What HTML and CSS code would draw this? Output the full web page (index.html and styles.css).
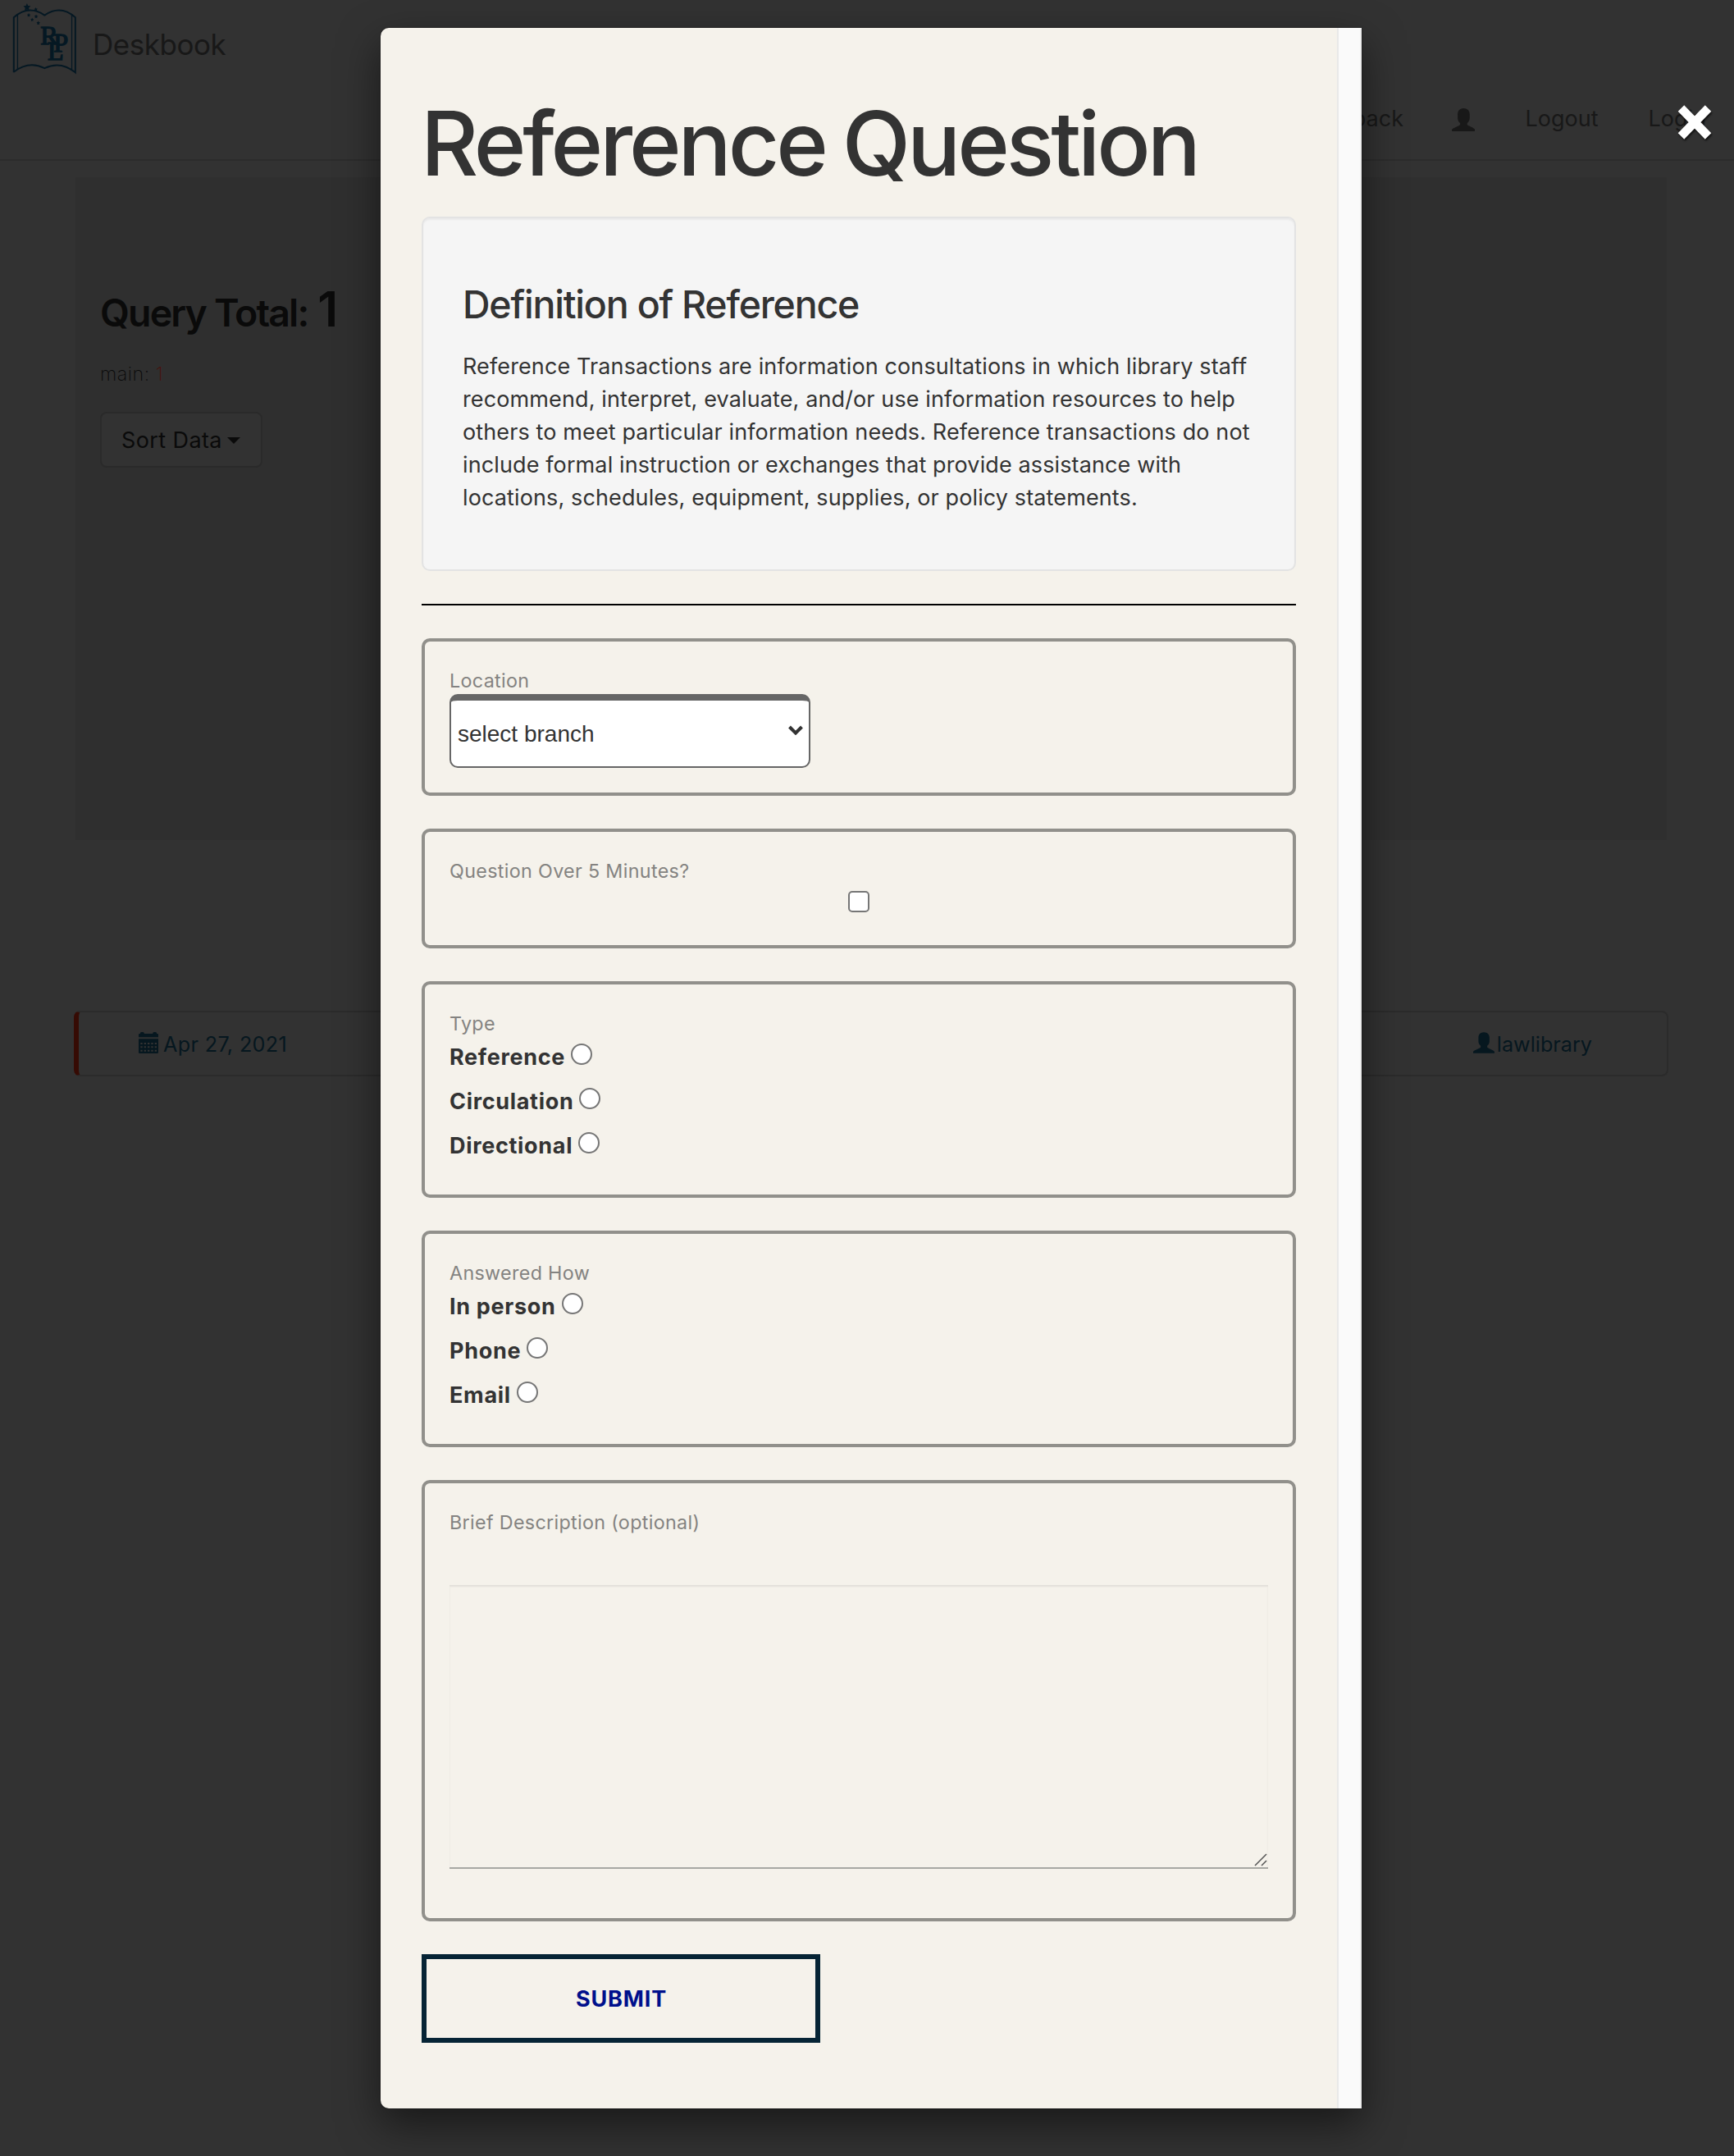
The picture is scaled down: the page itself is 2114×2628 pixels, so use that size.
FILE: index.html
```html
<!DOCTYPE html>
<html lang="en">
<head>
<meta charset="utf-8">
<title>Deskbook</title>
<link rel="stylesheet" href="styles.css">
</head>
<body>
<svg width="0" height="0" class="defs" aria-hidden="true">
  <symbol id="user" viewBox="0 0 85 84"><path d="M43 0C29 0 21 9 21 22V34C21 44 24 50 30 54V60C30 63 2 72 0 78V84H85V78C83 72 56 63 56 60V54C62 50 65 44 65 34V22C65 9 56 0 43 0Z"/></symbol>
  <symbol id="star" viewBox="0 0 20 20"><path d="M10 0L13 6.500L20 7.500L15 12.500L16 20L10 16.500L4 20L5 12.500L0 7.500L7 6.500Z"/></symbol>
</svg>

<header class="navbar">
  <div class="brand">
    <svg class="logo" viewBox="0 0 300 280">
      <g fill="none" stroke="currentColor">
        <path stroke-width="6" d="M50 266V64Q105 16 163 56Q222 16 276 64V266Q222 222 163 250Q105 222 50 264"/>
        <path stroke-width="4" d="M64 54V254M263 54V254"/>
      </g>
      <g fill="currentColor">
        <use href="#star" x="84" y="12" width="29" height="27"/>
        <use href="#star" x="124" y="27" width="14" height="14"/>
        <use href="#star" x="98" y="48" width="14" height="14"/>
        <use href="#star" x="125" y="53" width="14" height="14"/>
        <use href="#star" x="111" y="65" width="13" height="13"/>
        <use href="#star" x="133" y="77" width="14" height="14"/>
        <g class="monogram"><text x="148" y="163">R</text><text x="196" y="190">P</text><text x="174" y="221">L</text></g>
      </g>
    </svg>
    <span class="brand-name">Deskbook</span>
  </div>
  <nav class="nav">
    <a>Feedback</a>
    <svg class="nav-user"><use href="#user"/></svg>
    <a>Logout</a>
    <a>Login</a>
  </nav>
</header>

<main class="container">
  <section class="jumbotron">
    <h2 class="total">Query Total: <span class="total-count">1</span></h2>
    <p class="branch">main: <span class="branch-count">1</span></p>
    <button class="sort">Sort Data <span class="caret"></span></button>
  </section>
  <section class="entry">
    <a class="entry-link">
      <svg class="calendar" viewBox="0 0 72 78">
        <path d="M0 9Q0 6 4 6H6V3Q6 0 13 0T20 3V6H52V3Q52 0 59 0T66 3V6H68Q72 6 72 9V19H0ZM0 25H72V74Q72 78 68 78H4Q0 78 0 74Z"/>
        <path class="calendar-days" d="M7 42H66M7 55H66M7 68H66"/>
      </svg>
      <span>Apr 27, 2021</span>
    </a>
    <a class="entry-link entry-user"><svg class="entry-icon"><use href="#user"/></svg><span>lawlibrary</span></a>
  </section>
</main>

<svg class="close" viewBox="0 0 42 44"><path d="M4.500 5L37.500 39M37.500 5L4.500 39"/></svg>

<div class="modal">
  <form class="sheet">
    <h1 class="title">Reference Question</h1>
    <div class="well">
      <h3 class="well-title">Definition of Reference</h3>
      <p class="well-text">Reference Transactions are information consultations in which library staff<br>recommend, interpret, evaluate, and/or use information resources to help<br>others to meet particular information needs. Reference transactions do not<br>include formal instruction or exchanges that provide assistance with<br>locations, schedules, equipment, supplies, or policy statements.</p>
    </div>
    <hr class="rule">
    <div class="fields">
      <div class="field field-location">
        <div class="legend">Location</div>
        <div class="select-wrap">
          <select class="select"><option>select branch</option></select>
          <svg class="chevron" viewBox="0 0 18 12"><path d="M1.500 2L9 9.500L16.500 2"/></svg>
        </div>
      </div>
      <div class="field field-check">
        <div class="legend">Question Over 5 Minutes?</div>
        <input class="check" type="checkbox">
      </div>
      <div class="field field-radios">
        <div class="legend">Type</div>
        <label class="option">Reference<input class="radio" type="radio" name="type"></label>
        <label class="option">Circulation<input class="radio" type="radio" name="type"></label>
        <label class="option">Directional<input class="radio" type="radio" name="type"></label>
      </div>
      <div class="field field-radios">
        <div class="legend">Answered How</div>
        <label class="option">In person<input class="radio" type="radio" name="how"></label>
        <label class="option">Phone<input class="radio" type="radio" name="how"></label>
        <label class="option">Email<input class="radio" type="radio" name="how"></label>
      </div>
      <div class="field field-text">
        <div class="legend">Brief Description (optional)</div>
        <div class="area-wrap">
          <textarea class="area"></textarea>
          <svg class="grip" viewBox="0 0 16 16"><path d="M1 15L15 1M9 15L15 9"/></svg>
        </div>
      </div>
    </div>
    <button class="submit" type="button">SUBMIT</button>
  </form>
  <div class="scrollbar"></div>
</div>
</body>
</html>
```
FILE: styles.css
```css
* { box-sizing: border-box; }
body {
  margin: 0;
  height: 2628px;
  overflow: hidden;
  position: relative;
  background: #323232;
  font-family: Inter, "Liberation Sans", sans-serif;
  font-size: 27px;
  color: #333;
}
h1, h2, h3, p { margin: 0; font-weight: 500; }
.defs { position: absolute; }

/* Page behind the dialog */
.navbar {
  display: flex;
  justify-content: space-between;
  height: 196px;
  border-bottom: 2px solid #2c2c2c;
  color: #181818;
}
.brand { display: flex; align-items: flex-start; }
.logo { width: 100px; height: 93px; color: #051823; }
.monogram { font: 400 97px "Liberation Serif", serif; stroke: currentColor; stroke-width: 4px; }
.brand-name { margin-left: 13px; font-size: 35px; line-height: 108px; letter-spacing: -0.450px; }
.nav { display: flex; align-items: flex-start; padding: 125px 34px 0 0; line-height: 40px; }
.nav a { margin-left: 60px; }
.nav-user { width: 28.500px; height: 28px; margin: 7px 1px 0 59px; fill: currentColor; }
.nav a + a { margin-left: 61px; }

.container { padding: 20px 80px 0 90px; }
.jumbotron {
  width: 1940px;
  height: 808px;
  margin-left: 2px;
  padding: 131px 30px 0;
  background: #2f2f2f;
  color: #0a0a0a;
}
.total { font-size: 46.500px; line-height: 60px; letter-spacing: -1.880px; font-weight: 600; }
.total-count { margin-left: 2px; font-size: 59px; letter-spacing: 0; }
.branch { margin-top: 28px; font-size: 23.300px; font-weight: 200; line-height: 34px; letter-spacing: 0.500px; }
.branch-count { color: #4a100b; font-weight: 250; }
.sort {
  display: flex;
  align-items: center;
  width: 198px;
  height: 68px;
  margin-top: 29px;
  padding: 1px 0 0 24px;
  border: 2px solid #2a2a2a;
  border-radius: 8px;
  background: #323232;
  color: #0a0a0a;
  font: 27px/40px Inter, sans-serif;
  letter-spacing: 0.400px;
}
.caret { margin-left: 6px; border: 8px solid transparent; border-top-color: currentColor; border-bottom: 0; }
.entry {
  display: flex;
  justify-content: space-between;
  align-items: flex-start;
  width: 1944px;
  height: 80px;
  margin-top: 208px;
  padding: 22px 91px 0 73px;
  border: 2px solid #2b2b2b;
  border-left: 6px solid #360b04;
  border-radius: 8px;
}
.entry-link { display: flex; gap: 6px; color: #06171f; font-size: 25.200px; line-height: 34px; letter-spacing: 0.340px; }
.entry-user { gap: 3px; letter-spacing: 0; }
.calendar { width: 24px; height: 26px; margin-top: 2px; fill: currentColor; }
.calendar-days { fill: none; stroke: #323232; stroke-width: 6; stroke-dasharray: 7 6; }
.entry-icon { width: 26px; height: 26px; margin-top: 2px; fill: currentColor; }

/* Dialog */
.modal {
  position: absolute;
  left: 464px;
  top: 34px;
  display: flex;
  width: 1196px;
  height: 2536px;
  border-radius: 10px 0 0 10px;
  background: #f5f2eb;
  box-shadow: 0 0 2px rgba(0,0,0,.5), 0 20px 50px rgba(0,0,0,.5);
  overflow: hidden;
}
.sheet { width: 1166px; padding: 80px 50px 0; }
.scrollbar { width: 30px; background: #fafafa; border: solid #e8e8e8; border-width: 0 2px; border-right-color: #ededed; }
.close {
  position: absolute;
  left: 2045px;
  top: 127px;
  width: 42px;
  height: 44px;
  overflow: visible;
  fill: none;
  stroke: #fff;
  stroke-width: 10.500;
  filter: drop-shadow(1px 2px 1px rgba(0,0,0,.7));
}

.title { margin-left: -1px; font-size: 108.500px; font-weight: 530; line-height: 121px; letter-spacing: -4.100px; word-spacing: -4px; white-space: nowrap; }
.well {
  height: 432px;
  margin-top: 29px;
  padding: 79px 48px 0;
  border: 2px solid #e3e3e3;
  border-radius: 10px;
  background: #f5f5f5;
  box-shadow: inset 0 2px 2px rgba(0,0,0,.05);
}
.well-title { font-size: 46.500px; font-weight: 550; line-height: 52px; letter-spacing: -1.220px; }
.well-text { margin-top: 30px; font-weight: 430; line-height: 40px; letter-spacing: 0.120px; white-space: nowrap; }
.rule { height: 2px; margin: 40px 0; border: 0; background: #000; }

.fields { display: flex; flex-direction: column; gap: 40px; }
.field { padding: 31px 30px 0; border: 4px solid #91908b; border-radius: 10px; }
.field-location { height: 192px; }
.field-check { height: 146px; }
.field-radios { height: 264px; }
.field-text { height: 538px; }
.legend { height: 33px; color: #848381; font-size: 23.300px; line-height: 34px; letter-spacing: 0.330px; }
.select-wrap { position: relative; width: 440px; }
.select {
  display: block;
  width: 440px;
  height: 90px;
  padding: 0 8px;
  appearance: none;
  border: 2px solid #666;
  border-top-width: 8px;
  border-radius: 10px;
  background: #fff;
  color: #333;
  font: 28px "Liberation Sans", sans-serif;
}
.chevron { position: absolute; right: 9px; top: 38px; width: 18px; height: 12px; fill: none; stroke: #333; stroke-width: 4; }
.check, .radio { flex: none; width: 26px; height: 26px; margin: 0; appearance: none; border: 2px solid #767676; background: #fff; }
.check { display: block; margin: 8px auto 0; border-radius: 5px; }
.radio { margin: 3px 0 0 7px; border-radius: 50%; }
.option { display: flex; align-items: flex-start; height: 54px; font-weight: 700; line-height: 40px; letter-spacing: 0.680px; }
.legend + .option { margin-top: 5px; }
.area-wrap { position: relative; margin-top: 60px; }
.area {
  display: block;
  width: 998px;
  height: 346px;
  resize: none;
  border: 0;
  border-bottom: 2px solid #a8a8a4;
  background: transparent;
  box-shadow: inset 0 2px 2px rgba(0,0,0,.075);
}
.grip { position: absolute; right: 1px; bottom: 3px; width: 16px; height: 16px; stroke: #555; stroke-width: 1.500; }
.submit {
  display: block;
  width: 486px;
  height: 108px;
  margin-top: 40px;
  padding: 2px 0 0 1px;
  border: 6px solid #062435;
  background: transparent;
  color: #00108c;
  font: 700 27px/40px Inter, sans-serif;
  letter-spacing: 0.830px;
}
```
